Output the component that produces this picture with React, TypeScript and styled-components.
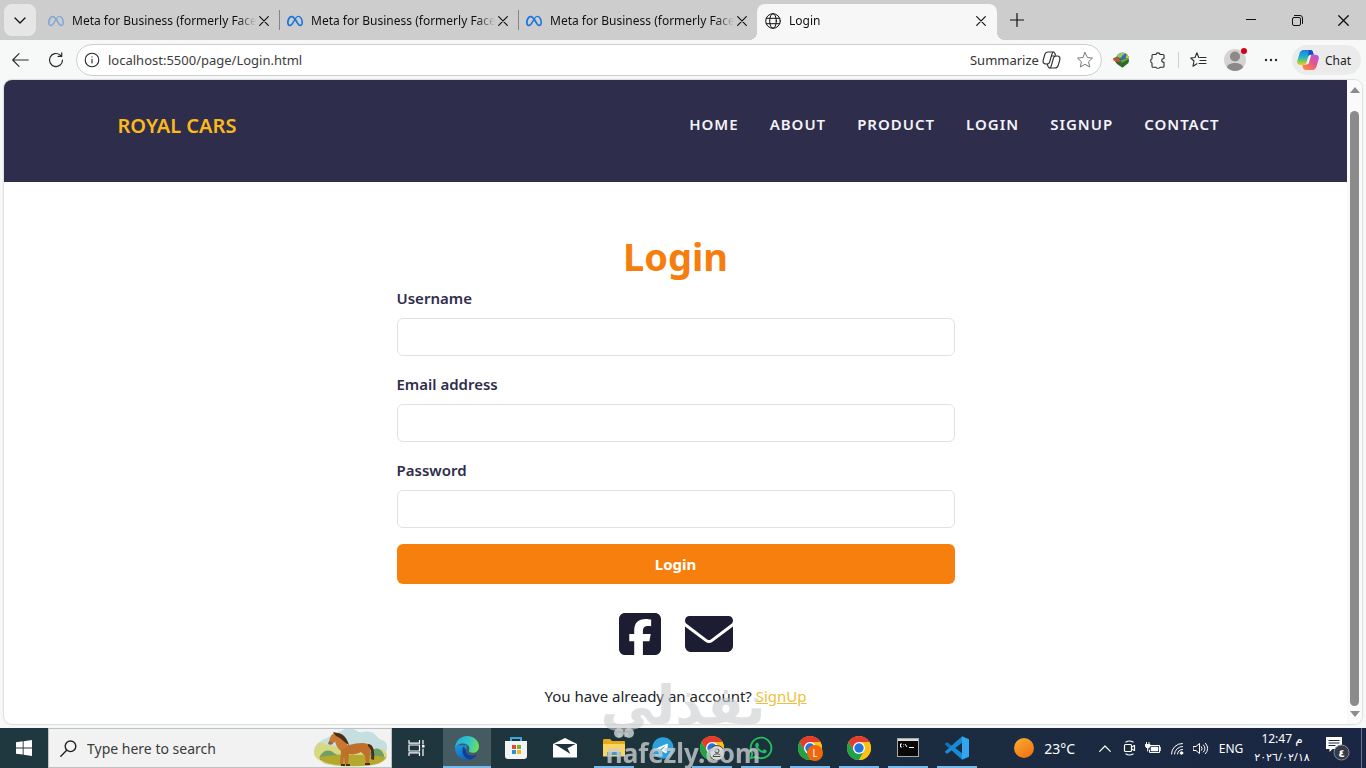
import React from "react";
import styled, { createGlobalStyle, css } from "styled-components";
import { FaEnvelope, FaMeta, FaSquareFacebook, FaTelegram, FaWhatsapp } from "react-icons/fa6";

const GlobalStyle = createGlobalStyle`
  *, *::before, *::after { box-sizing: border-box; }
  body { margin: 0; background: #f7f8f8; color: #212529; font-family: "Noto Sans", "Open Sans", "DejaVu Sans", sans-serif; }
  button { font: inherit; color: inherit; border: 0; background: none; padding: 0; cursor: pointer; }
  svg { display: block; flex: none; }
`;

const Desktop = styled.div`
  position: relative;
  display: flex;
  flex-direction: column;
  min-height: 100vh;
`;

/* Tab strip */
const TabStrip = styled.div`
  display: flex;
  align-items: flex-end;
  height: 40px;
  padding-left: 4px;
  background: #cdcdcd;
  color: #111;
`;
const TabMenuButton = styled.button`
  display: grid;
  place-items: center;
  width: 32px;
  height: 32px;
  margin: 0 4px 4px 0;
  border-radius: 8px;
  background: #e6e6e6;
`;
const Tab = styled.div<{ $active?: boolean; $divider?: boolean }>`
  position: relative;
  display: flex;
  align-items: center;
  gap: 8px;
  flex: 0 1 239px;
  min-width: 0;
  height: 36px;
  padding: 0 7px 3px 8px;
  border-radius: 8px 8px 0 0;
  font-size: 12px;
  ${(p) => p.$divider && css`
    &::after { content: ""; position: absolute; right: -1px; top: 6px; width: 1px; height: 20px; background: #858585; }
  `}
  ${(p) => p.$active && css`
    flex-basis: 240px;
    padding-right: 8px;
    background: #f7f7f7;
    &::before, &::after { content: ""; position: absolute; bottom: 0; width: 8px; height: 8px; }
    &::before { left: -8px; background: radial-gradient(circle at 0 0, transparent 8px, #f7f7f7 8px); }
    &::after { right: -8px; background: radial-gradient(circle at 100% 0, transparent 8px, #f7f7f7 8px); }
  `}
`;
const TabTitle = styled.span`
  flex: 1;
  min-width: 0;
  margin-right: -8px;
  overflow: hidden;
  white-space: nowrap;
  line-height: 20px;
  mask-image: linear-gradient(to right, #000 calc(100% - 18px), transparent);
`;
const TabIcon = styled.span<{ $faded?: boolean }>`
  color: #1673e0;
  opacity: ${(p) => (p.$faded ? 0.4 : 1)};
`;
const CloseButton = styled.button`
  display: grid;
  place-items: center;
  width: 16px;
  height: 16px;
`;
const NewTabButton = styled.button`
  display: grid;
  place-items: center;
  width: 40px;
  height: 40px;
`;
const WindowControls = styled.div`
  display: flex;
  margin-left: auto;
`;
const WindowButton = styled.button`
  display: grid;
  place-items: center;
  width: 46px;
  height: 40px;
`;

/* Address row */
const Toolbar = styled.div`
  display: flex;
  align-items: center;
  height: 40px;
  padding-right: 5px;
  background: #f7f8f8;
`;
const ToolButton = styled.button<{ $width?: number }>`
  position: relative;
  display: grid;
  place-items: center;
  width: ${(p) => p.$width ?? 36}px;
  height: 32px;
  color: #2b2b2b;
`;
const AddressBar = styled.div`
  display: flex;
  align-items: center;
  flex: 1;
  min-width: 0;
  height: 32px;
  margin: 0 2px 0 4px;
  padding: 0 7px;
  border: 1px solid #cdcfcf;
  border-radius: 16px;
  background: #fff;
  font-size: 13px;
`;
const AddressInput = styled.input`
  flex: 1;
  min-width: 0;
  margin-left: 8px;
  padding: 0;
  border: 0;
  outline: 0;
  background: none;
  color: #3c3c3c;
  font: inherit;
`;
const Summarize = styled.button`
  display: flex;
  align-items: center;
  gap: 3px;
  margin-right: 15px;
  font-size: 13px;
  color: #333;
`;
const ToolDivider = styled.span`
  width: 1px;
  height: 16px;
  margin: 0 2px;
  background: #cfcfcf;
`;
const AvatarDot = styled.span`
  position: absolute;
  top: 4px;
  right: 6px;
  width: 6px;
  height: 6px;
  border-radius: 50%;
  background: #d0021b;
`;
const ChatButton = styled.button`
  display: flex;
  align-items: center;
  gap: 6px;
  height: 30px;
  margin-left: 3px;
  padding: 0 10px 0 5px;
  border-radius: 15px;
  background: #ebebeb;
  font-size: 12px;
  color: #222;
`;

/* Web page viewport */
const Viewport = styled.div`
  display: flex;
  flex: 1;
  margin: 0 4px 4px;
  border-radius: 8px;
  background: #fff;
  box-shadow: 0 0 1px 1px #dcdede;
  overflow: hidden;
`;
const Site = styled.div`
  flex: 1;
  min-width: 0;
`;
const SiteHeader = styled.header`
  padding: 25px 0 37px;
  background: #2f2d4c;
`;
const HeaderInner = styled.div`
  display: flex;
  align-items: center;
  justify-content: space-between;
  max-width: 1140px;
  height: 40px;
  margin: 0 auto;
  padding: 0 26px 0 12px;
`;
const Brand = styled.a`
  color: #fbb91a;
  font-size: 20px;
  font-weight: 600;
  text-decoration: none;
`;
const Nav = styled.nav`
  display: flex;
  gap: 31px;
  padding-bottom: 2px;
`;
const NavLink = styled.a`
  color: #f4f4f8;
  font-size: 15px;
  font-weight: 600;
  letter-spacing: 1px;
  text-decoration: none;
`;
const Main = styled.main`
  max-width: 558px;
  margin: 0 auto;
  padding-top: 50px;
`;
const Title = styled.h1`
  margin: 0 0 6px;
  color: #f57e0e;
  font-size: 38px;
  font-weight: 700;
  line-height: 48px;
  text-align: center;
`;
const Field = styled.div`
  margin-bottom: 16px;
`;
const Label = styled.label`
  display: block;
  margin-bottom: 8px;
  color: #2f2d4c;
  font-size: 15px;
  font-weight: 600;
  line-height: 24px;
`;
const TextInput = styled.input`
  display: block;
  width: 100%;
  height: 38px;
  padding: 6px 12px;
  border: 1px solid #dee2e6;
  border-radius: 6px;
  background: #fff;
  font: inherit;
`;
const SubmitButton = styled.button`
  display: block;
  width: 100%;
  height: 40px;
  border-radius: 6px;
  background: #f77f0e;
  color: #fff;
  font-size: 15px;
  font-weight: 700;
`;
const Socials = styled.div`
  display: flex;
  justify-content: center;
  gap: 24px;
  padding: 26px 0;
`;
const SocialLink = styled.a`
  color: #1c1c33;
`;
const FacebookIcon = styled(FaSquareFacebook)`
  width: 42px;
  height: 48px;
`;
const SignupLine = styled.p`
  margin: 0;
  font-size: 15px;
  line-height: 24px;
  text-align: center;
`;
const SignupLink = styled.a`
  color: #eebf3a;
`;
const Scrollbar = styled.div`
  display: flex;
  flex-direction: column;
  align-items: center;
  justify-content: space-between;
  width: 15px;
  padding: 7px 0;
  background: #fafafa;
`;
const ScrollArrow = styled.span<{ $down?: boolean }>`
  border: 5px solid transparent;
  ${(p) => (p.$down ? "border-top: 6px solid #8b8b8b; border-bottom: 0;" : "border-bottom: 6px solid #8b8b8b; border-top: 0;")}
`;
const ScrollThumb = styled.span`
  flex: 1;
  width: 9px;
  margin: 18px 0 5px;
  border-radius: 5px;
  background: #8b8b8b;
`;

/* Windows taskbar */
const Taskbar = styled.footer`
  display: flex;
  height: 40px;
  background: linear-gradient(to right, #1f373e, #1d343d 50%, #1b2c3f 65%, #1a2643);
  color: #fff;
`;
const StartButton = styled.button`
  display: grid;
  place-items: center;
  width: 48px;
`;
const SearchBox = styled.label`
  display: flex;
  align-items: center;
  gap: 10px;
  flex: 0 1 344px;
  min-width: 0;
  padding: 0 2px 0 11px;
  border: 1px solid #bcc2c4;
  background: #f2f2f2;
  color: #222;
`;
const SearchInput = styled.input`
  flex: 1;
  min-width: 0;
  padding: 0;
  border: 0;
  outline: 0;
  background: none;
  font: inherit;
  font-size: 14px;
  &::placeholder { color: #3a3a3a; opacity: 1; }
`;
const Apps = styled.div`
  display: flex;
  gap: 1px;
`;
const AppButton = styled.button<{ $active?: boolean; $running?: boolean }>`
  position: relative;
  display: grid;
  place-items: center;
  width: 48px;
  background: ${(p) => (p.$active ? "#455a61" : "none")};
  ${(p) => (p.$active || p.$running) && css`
    &::after { content: ""; position: absolute; bottom: 0; left: ${p.$active ? 0 : 4}px; right: ${p.$active ? 0 : 4}px; height: 2px; background: #76b9ed; }
  `}
`;
const TaskViewButton = styled(AppButton)`
  margin-right: 3px;
`;
const Tray = styled.div`
  display: flex;
  align-items: center;
  margin-left: auto;
`;
const Weather = styled.button`
  display: flex;
  align-items: center;
  gap: 10px;
  margin-right: 18px;
  font-size: 14px;
`;
const TrayButton = styled.button`
  display: grid;
  place-items: center;
  width: 24px;
  height: 40px;
`;
const Language = styled.button`
  width: 36px;
  font-size: 12px;
`;
const Clock = styled.button`
  width: 66px;
  font-family: "Noto Sans", "DejaVu Sans", sans-serif;
  font-size: 12px;
  line-height: 18px;
`;
const DateLine = styled.div`
  font-size: 11px;
`;
const NotificationButton = styled.button`
  display: grid;
  place-items: center;
  width: 46px;
  height: 40px;
`;
const ShowDesktop = styled.button`
  width: 5px;
  height: 40px;
  border-left: 1px solid #66718a;
`;

/* Brand mark laid over the lower part of the screen */
const Watermark = styled.div`
  position: absolute;
  right: 0;
  bottom: 0;
  left: 0;
  display: flex;
  flex-direction: column;
  align-items: center;
  color: #c9cdd0;
  font-weight: 700;
  white-space: nowrap;
  pointer-events: none;
`;
const WatermarkArabic = styled.span`
  font-family: "DejaVu Sans", sans-serif;
  font-size: 54px;
  line-height: 44px;
  opacity: 0.6;
`;
const WatermarkLatin = styled.span`
  font-size: 26px;
  line-height: 30px;
  opacity: 0.8;
`;
const WatermarkDots = styled.svg`
  margin-right: 118px;
  opacity: 0.85;
`;

const line = { fill: "none", stroke: "currentColor", strokeLinecap: "round", strokeLinejoin: "round" } as const;

const Cross = ({ size = 10 }: { size?: number }) => (
  <svg width={size} height={size} viewBox="0 0 10 10" {...line} strokeWidth="1.2"><path d="M.7.7l8.6 8.6M9.3.7L.7 9.3" /></svg>
);

const Globe = () => (
  <svg width="16" height="16" viewBox="0 0 16 16" {...line}>
    <circle cx="8" cy="8" r="7.3" /><ellipse cx="8" cy="8" rx="3.3" ry="7.3" /><path d="M1.3 5.3h13.4M1.3 10.7h13.4" />
  </svg>
);

const CopilotLine = () => (
  <svg width="19" height="18" viewBox="0 0 19 18" {...line} strokeWidth="1.2">
    <path d="M5.2 13H3.8C1.5 13 .6 11.4 1.200 9.200L2.700 3.900C3.300 1.800 4.300 1 6 1h5.200c1 0 1.500.7 1.800 1.600l.4 1.400" />
    <path d="M13.800 5h1.400c2.300 0 3.200 1.600 2.600 3.800l-1.500 5.300c-.6 2.100-1.600 2.900-3.300 2.900H7.800c-1 0-1.500-.7-1.800-1.600L5.200 13c1.300 0 2-.6 2.400-1.900L10 2.800C10.300 1.700 10.700 1 11.400 1" />
    <path d="M7.700 17c.8 0 1.200-.7 1.500-1.800l2.300-8.100C11.900 5.700 12.600 5 13.800 5H9.500" />
  </svg>
);

const CopilotColor = () => (
  <svg width="22" height="20" viewBox="0 0 22 20">
    <defs>
      <linearGradient id="cpA" x1="0" y1="0" x2="0" y2="1"><stop offset="0" stopColor="#1683e9" /><stop offset=".5" stopColor="#27b4c7" /><stop offset=".8" stopColor="#95cb45" /><stop offset="1" stopColor="#f6cb24" /></linearGradient>
      <linearGradient id="cpB" x1="1" y1="0" x2=".2" y2="1"><stop offset="0" stopColor="#a95be8" /><stop offset=".5" stopColor="#e5558f" /><stop offset="1" stopColor="#fa8a3c" /></linearGradient>
    </defs>
    <path d="M6.500 0h7c1.500 0 2 .8 2.400 2l.8 2.700h-2.900c-1.500 0-2.200.7-2.700 2.200l-1.700 5.500C8.800 14.200 8 15 6.300 15H3.800C.8 15-.4 13 .4 10.400L2.500 3.500C3.200 1.200 4.500 0 6.500 0z" fill="url(#cpA)" />
    <path d="M11.500 0h2c1.500 0 2 .8 2.400 2l.8 2.700h-2.900c-1.200 0-2 .6-2.500 1.700z" fill="#1951c5" />
    <path d="M15.500 20h-7c-1.500 0-2-.8-2.400-2L5.300 15h2.300c1.500 0 2.500-.7 3-2.200l1.700-5.500c.5-1.700 1.300-2.500 3-2.500h2.900c3 0 4.200 2 3.400 4.600l-2.100 7.100c-.7 2.300-2 3.500-4 3.500z" fill="url(#cpB)" />
    <path d="M10 14.200l2.300-8c.3-.8.900-1.400 1.900-1.500l-2.500 8.500c-.3.900-.9 1.400-1.700 1z" fill="#fff" />
  </svg>
);

const IdmIcon = () => (
  <svg width="17" height="16" viewBox="0 0 17 16">
    <circle cx="9.500" cy="7" r="6.500" fill="#2f6fae" />
    <path d="M4 4C5.500 1 9.500 0 12 1.300c-1 2-2.600 1.700-3.200 3.200S5.200 6.400 4 4z" fill="#9fca5a" />
    <path d="M13.500 2.200c2.300 1.600 3 4.600 2 7.300l-3-1.500z" fill="#d9c23a" />
    <path d="M0 6.500L3.500 5l4.500 3.500L14.500 6 16 8l-.6 3-5.900 4.800L4 12z" fill="#2c6a25" />
    <path d="M0 6.500L3.500 5 8 8.500l-1.500 1.500L1 9z" fill="#c9542f" />
    <path d="M8 8.500L14.500 6l1 1.300L8.500 11z" fill="#63a944" />
  </svg>
);

const Chrome = ({ badge }: { badge?: "letter" | "person" }) => (
  <svg width="26" height="26" viewBox="0 0 26 26">
    <g transform="translate(1 1)">
      <circle cx="12" cy="12" r="12" fill="#fbc116" />
      <path d="M12 6h10.400A12 12 0 0 0 1.600 6l5.200 9z" fill="#e33b2e" />
      <path d="M1.600 6A12 12 0 0 0 12 24l5.200-9-10.400 0z" fill="#1fa24a" />
      <path d="M12 6h10.400A12 12 0 0 1 12 24l5.200-9z" fill="#fbc116" />
      <circle cx="12" cy="12" r="6" fill="#fff" /><circle cx="12" cy="12" r="4.700" fill="#2374e1" />
    </g>
    {badge === "letter" && <><circle cx="18" cy="18" r="8" fill="#f0680b" /><text x="18" y="22" textAnchor="middle" fontSize="10" fill="#fff">L</text></>}
    {badge === "person" && <g stroke="#444" fill="#dcdcdc"><circle cx="18" cy="18" r="7.500" /><circle cx="18" cy="16" r="2" /><path d="M14 21.500c1-3.500 7-3.500 8 0z" /></g>}
  </svg>
);

const Edge = () => (
  <svg width="24" height="24" viewBox="0 0 24 24">
    <defs>
      <linearGradient id="edTop" x1="0" y1=".3" x2="1" y2=".5"><stop offset="0" stopColor="#25a9e0" /><stop offset=".55" stopColor="#2fc5c8" /><stop offset="1" stopColor="#6de05a" /></linearGradient>
      <linearGradient id="edBase" x1="0" y1="0" x2=".8" y2="1"><stop offset="0" stopColor="#1b9ce2" /><stop offset="1" stopColor="#0b57b5" /></linearGradient>
    </defs>
    <path d="M.3 9.500C-1 17 4.500 24 12 24c4.500 0 8-2 10-5.400-5 2.500-10.500.5-10.700-4.100L12 9z" fill="url(#edBase)" />
    <path d="M8.500 10.500C6 15 8 22 15 23.600c3-.7 5.500-2.400 7-5-5 2.500-11.500.4-11-4.400z" fill="#123f8f" />
    <path d="M.1 11.500C.5 5 5.500 0 12 0c7 0 12 5 12 10.500 0 4-2.800 6.300-6.300 6.300-3 0-4.200-1.200-3.700-2.200 1.500-3-.8-7-5.500-7C4.500 7.600 1 9.500.1 11.500z" fill="url(#edTop)" />
  </svg>
);

const Horse = () => (
  <svg width="76" height="38" viewBox="0 0 76 38">
    <path d="M8 12C12 9 14 10 18 6S26 4 30 1s10-2 14 1 8-1 14 1 5 6 11 8 6 8 4 12 1 7-4 9-9 4-14 4H19c-5 0-9-1-11-4s-7-4-7-9 3-9 7-11z" fill="#c5dfe1" />
    <path d="M1 23C2 15 7 12 13 15l18 5h38c6 2 6 8 3 11-8 8-56 9-64 1-5-2-7-5-7-9z" fill="#d7d982" />
    <path d="M7 27c4-6 9-7 14-3s8 0 13 2v5H7zM55 26c5-9 13-8 16 0v4H55z" fill="#6f9e66" />
    <path d="M6 28c18-3 45-3 67 0-4 8-15 9-30 9S9 36 6 28z" fill="#b5a82e" />
    <path d="M26 14c3 2 6 3 10 2 8-2 14-3 19-1 3 2 3 6 2 9l-1 10h-3l-1-7-4-4c-4 2-8 3-12 2l-1 10h-3l-1-9-1 9h-3l1-13c-4-3-5-7-6-10z" fill="#bf702a" />
    <path d="M21 4c6-1 10 4 13 11 0 4-4 7-8 5-2-2-3-6-3-8l-4 3-3-1c0-4 2-8 5-10z" fill="#c9792f" />
    <path d="M20 3l4 1c6 0 10 5 12 12-5-2-7-7-13-9zM55 15c5 0 7 6 6 16l-3-1c1-6 0-11-3-13zM28 35h4v2h-4zM33 35h4v2h-4zM52 34h5v2h-5z" fill="#4c2b18" />
    <path d="M16 12l4 2-2 2-3-1z" fill="#86665a" />
  </svg>
);

const fields = [
  { id: "username", label: "Username", type: "text" },
  { id: "email", label: "Email address", type: "email" },
  { id: "password", label: "Password", type: "password" },
];
const navItems = ["HOME", "ABOUT", "PRODUCT", "LOGIN", "SIGNUP", "CONTACT"];

const BrowserChrome = () => (
  <>
    <TabStrip>
      <TabMenuButton aria-label="Tab actions"><svg width="12" height="7" viewBox="0 0 12 7" {...line} strokeWidth="1.300"><path d="M1 1l5 5 5-5" /></svg></TabMenuButton>
      {[0, 1, 2].map((i) => (
        <Tab key={i} $divider={i < 2}>
          <TabIcon $faded={i === 0}><FaMeta size={16} /></TabIcon>
          <TabTitle>Meta for Business (formerly Facebook)</TabTitle>
          <CloseButton aria-label="Close tab"><Cross /></CloseButton>
        </Tab>
      ))}
      <Tab $active>
        <Globe />
        <TabTitle>Login</TabTitle>
        <CloseButton aria-label="Close tab"><Cross /></CloseButton>
      </Tab>
      <NewTabButton aria-label="New tab"><svg width="14" height="14" viewBox="0 0 14 14" {...line} strokeWidth="1.200"><path d="M7 .5v13M.5 7h13" /></svg></NewTabButton>
      <WindowControls>
        <WindowButton aria-label="Minimize"><svg width="10" height="10" viewBox="0 0 10 10" {...line}><path d="M0 4.500h10" /></svg></WindowButton>
        <WindowButton aria-label="Restore"><svg width="11" height="11" viewBox="0 0 11 11" {...line}><rect x=".5" y="2.500" width="8" height="8" rx="1.500" /><path d="M2.500.5H8A2.500 2.500 0 0 1 10.500 3v5.500" /></svg></WindowButton>
        <WindowButton aria-label="Close window"><Cross size={11} /></WindowButton>
      </WindowControls>
    </TabStrip>
    <Toolbar>
      <ToolButton $width={40} aria-label="Back"><svg width="17" height="14" viewBox="0 0 17 14" {...line} strokeWidth="1.100"><path d="M7 .7L.7 7 7 13.300M.7 7h15.600" /></svg></ToolButton>
      <ToolButton $width={32} aria-label="Reload"><svg width="16" height="16" viewBox="0 0 16 16" {...line} strokeWidth="1.200"><path d="M14.500 8A6.500 6.500 0 1 1 12 2.900l1.500 1.300M13.700.8v3.600h-3.600" /></svg></ToolButton>
      <AddressBar>
        <svg width="16" height="16" viewBox="0 0 16 16" {...line} strokeWidth="1.100"><circle cx="8" cy="8" r="6.800" /><path d="M8 7.300v3.700M8 4.800v.2" /></svg>
        <AddressInput aria-label="Address" defaultValue="localhost:5500/page/Login.html" />
        <Summarize>Summarize <CopilotLine /></Summarize>
        <button aria-label="Favorite"><svg width="18" height="18" viewBox="0 0 18 18" {...line} stroke="#777"><path d="M9 1.500l2.300 5 5.200.6-3.900 3.600 1.100 5.300L9 13.300 4.300 16l1.100-5.300-3.900-3.600 5.200-.6z" /></svg></button>
      </AddressBar>
      <ToolButton aria-label="Downloads"><IdmIcon /></ToolButton>
      <ToolButton aria-label="Extensions"><svg width="16" height="17" viewBox="0 0 16 17" {...line} strokeWidth="1.100"><path d="M3 2.500h3C6 .3 10 .3 10 2.500h3a1 1 0 0 1 1 1v3c-3-.2-3 4 0 3.800v4a1 1 0 0 1-1 1h-3c0-.2.200 1-2 1s-2-1.200-2-1H3a1 1 0 0 1-1-1V11c-1.800-.3-1.800-4 0-4.300V3.500a1 1 0 0 1 1-1z" /></svg></ToolButton>
      <ToolDivider />
      <ToolButton aria-label="Favorites"><svg width="17" height="16" viewBox="0 0 17 16" {...line} strokeWidth="1.100"><path d="M9 5.500H8.700L6.900.8 5 5.500.7 6l3.300 3-1 5.200 3.900-2.500M10 5.500h6M10 8.500h6M9 11.500h7" /></svg></ToolButton>
      <ToolButton aria-label="Profile">
        <svg width="22" height="22" viewBox="0 0 22 22"><circle cx="11" cy="11" r="11" fill="#d4d3d1" /><circle cx="11" cy="7.500" r="5" fill="#8c8a88" /><path d="M3 18.500c0-6 16-6 16 0-4 4.600-12 4.600-16 0z" fill="#8c8a88" /></svg>
        <AvatarDot />
      </ToolButton>
      <ToolButton aria-label="More"><svg width="14" height="4" viewBox="0 0 14 4" fill="currentColor"><circle cx="2" cy="2" r="1.200" /><circle cx="7" cy="2" r="1.200" /><circle cx="12" cy="2" r="1.200" /></svg></ToolButton>
      <ChatButton><CopilotColor />Chat</ChatButton>
    </Toolbar>
  </>
);

const LoginPage = () => (
  <Site>
    <SiteHeader>
      <HeaderInner>
        <Brand href="#">ROYAL CARS</Brand>
        <Nav>{navItems.map((item) => <NavLink key={item} href="#">{item}</NavLink>)}</Nav>
      </HeaderInner>
    </SiteHeader>
    <Main>
      <Title>Login</Title>
      <form onSubmit={(e) => e.preventDefault()}>
        {fields.map((f) => (
          <Field key={f.id}><Label htmlFor={f.id}>{f.label}</Label><TextInput id={f.id} type={f.type} /></Field>
        ))}
        <SubmitButton type="submit">Login</SubmitButton>
      </form>
      <Socials>
        <SocialLink href="#" aria-label="Facebook"><FacebookIcon /></SocialLink>
        <SocialLink href="#" aria-label="Email"><FaEnvelope size={48} /></SocialLink>
      </Socials>
      <SignupLine>You have already an account? <SignupLink href="#">SignUp</SignupLink></SignupLine>
    </Main>
  </Site>
);

const WindowsTaskbar = () => (
  <Taskbar>
    <StartButton aria-label="Start"><svg width="16" height="16" viewBox="0 0 16 16" fill="#fff"><path d="M0 2.300L6.700 1.300v6.200H0zM7.600 1.200L16 0v7.500H7.600zM0 8.400h6.700v6.200L0 13.700zM7.600 8.400H16V16l-8.400-1.200z" /></svg></StartButton>
    <SearchBox>
      <svg width="17" height="17" viewBox="0 0 17 17" {...line} strokeWidth="1.400"><circle cx="10.500" cy="6.300" r="5.300" /><path d="M6.700 10.200L.8 16.200" /></svg>
      <SearchInput placeholder="Type here to search" />
      <Horse />
    </SearchBox>
    <TaskViewButton aria-label="Task view"><svg width="17" height="16" viewBox="0 0 17 16" {...line} strokeWidth="1.200"><path d="M1 .5v2.700h10.500V.5M1 15.500v-2.700h10.500v2.700M1 5h10.500v6H1zM15 0v4M15 9v7" /><rect x="14" y="5" width="2.500" height="2.500" fill="#fff" stroke="none" /></svg></TaskViewButton>
    <Apps>
      <AppButton $active aria-label="Edge"><Edge /></AppButton>
      <AppButton aria-label="Store"><svg width="24" height="24" viewBox="0 0 24 24"><path d="M7 6V2h10v4" fill="none" stroke="#38a8d9" strokeWidth="2" /><path d="M1 5h22v15a3 3 0 0 1-3 3H4a3 3 0 0 1-3-3z" fill="#f1f3f4" /><path d="M8 9h4v4H8z" fill="#e74b2c" /><path d="M13 9h4v4h-4z" fill="#78b52b" /><path d="M8 14h4v4H8z" fill="#2495d3" /><path d="M13 14h4v4h-4z" fill="#f3b51d" /></svg></AppButton>
      <AppButton aria-label="Mail"><svg width="24" height="20" viewBox="0 0 24 20"><path d="M0 6l12-6 12 6v13.500H0z" fill="#fff" /><path d="M1.500 6h21L14.500 10.200 17.500 16z" fill="#1d343d" /></svg></AppButton>
      <AppButton $running aria-label="File Explorer"><svg width="22" height="20" viewBox="0 0 22 20"><path d="M0 2.500C0 1.500.5 1 1.500 1H7l2 2h12c.7 0 1 .5 1 1v14H0z" fill="#e5a91e" /><path d="M0 6h22v12.500H0z" fill="#fbd462" /><path d="M4 19v-5h14v5h-3v-2H7v2z" fill="#4597d1" /></svg></AppButton>
      <AppButton aria-label="Telegram"><svg width="22" height="22" viewBox="0 0 22 22"><circle cx="11" cy="11" r="10" fill="#fff" /><FaTelegram size={22} color="#2aa1dc" /></svg></AppButton>
      <AppButton $running aria-label="Chrome profile"><Chrome badge="person" /></AppButton>
      <AppButton $running aria-label="WhatsApp"><FaWhatsapp size={26} color="#24bd5c" /></AppButton>
      <AppButton $running aria-label="Chrome L"><Chrome badge="letter" /></AppButton>
      <AppButton $running aria-label="Chrome"><Chrome /></AppButton>
      <AppButton $running aria-label="Command Prompt"><svg width="22" height="20" viewBox="0 0 22 20"><rect x=".5" y=".5" width="21" height="18" fill="#080808" stroke="#a9a9a9" /><path d="M1 1h20v2H1z" fill="#ddd" /><path d="M5 6H3.500v3H5M6.500 6.300v.5M6.500 8.500v.5M8 6l2 3M12 9.500h5" fill="none" stroke="#fff" /></svg></AppButton>
      <AppButton $running aria-label="Visual Studio Code"><svg width="24" height="24" viewBox="0 0 24 24"><path d="M17 .5L6.800 9.700 2.300 6.300 0 7.400v1.200L17 23.500l1-5.500v-12z" fill="#1173b8" /><path d="M17 23.500L6.800 14.300l-4.500 3.400L0 16.600v-1.200L17 .5l1 5.500v12z" fill="#1a8ad4" /><path d="M17 6.800L10.300 12l6.700 5.200z" fill="#1b2c3f" /><path d="M17 .2l7 3v17.600l-7 3z" fill="#32a7ee" /></svg></AppButton>
    </Apps>
    <Tray>
      <Weather><svg width="20" height="20" viewBox="0 0 20 20"><defs><linearGradient id="sun" x1="0" y1="0" x2=".6" y2="1"><stop offset="0" stopColor="#f9ae2f" /><stop offset="1" stopColor="#f27516" /></linearGradient></defs><circle cx="10" cy="10" r="10" fill="url(#sun)" /></svg>23°C</Weather>
      <TrayButton aria-label="Hidden icons"><svg width="12" height="7" viewBox="0 0 12 7" {...line} strokeWidth="1.200"><path d="M.7 6.300L6 1l5.300 5.300" /></svg></TrayButton>
      <TrayButton aria-label="Meet now"><svg width="13" height="16" viewBox="0 0 13 16" {...line} strokeWidth="1.200"><rect x="1.500" y="4.500" width="7" height="7" rx="1" /><path d="M8.500 7l3-1.500v5l-3-1.500M3 2q3.500-2 7 0M3 14q3.500 2 7 0" /></svg></TrayButton>
      <TrayButton aria-label="Battery"><svg width="16" height="12" viewBox="0 0 16 12" {...line}><path d="M5 3.500h9.500v7h-10V8" /><path d="M6.500 5.500h6v3h-6zM15 5.500v3" fill="#fff" strokeWidth="1.500" /><path d="M1.500.5v2M4 .5v2M.5 2.500H5v2L3.500 6H2L.5 4.500zM2.700 6v3" fill="#fff" /></svg></TrayButton>
      <TrayButton aria-label="Network"><svg width="14" height="13" viewBox="0 0 14 13" {...line}><path d="M1.500 12A10.500 10.500 0 0 1 12.500 1.500M4.500 12A8 8 0 0 1 12.500 4.500M7.500 12A5 5 0 0 1 12.500 7.500" /><circle cx="11.500" cy="11" r="1.300" fill="#fff" /></svg></TrayButton>
      <TrayButton aria-label="Volume"><svg width="16" height="13" viewBox="0 0 16 13" {...line}><path d="M.5 4.500h2.500l3.500-3v10L3 8.500H.5zM8.500 4.700q1.500 1.800 0 3.600M10.500 3q3 3.500 0 7M12.500 1.300q4.500 5.200 0 10.400" /></svg></TrayButton>
      <Language>ENG</Language>
      <Clock><div dir="ltr">12:47 م</div><DateLine dir="ltr">٢٠٢٦/٠٢/١٨</DateLine></Clock>
      <NotificationButton aria-label="Notifications"><svg width="26" height="26" viewBox="0 0 26 26"><path d="M1 2h16v12H7.500L4.500 17v-3H1z" fill="#fff" /><path d="M3.500 5.500h11M3.500 8h11M3.500 10.500h7" stroke="#1a2643" /><circle cx="16.500" cy="17.500" r="7.500" fill="#343a46" stroke="#8b8f98" /><text x="16.500" y="21.500" textAnchor="middle" fontSize="11" fontWeight="700" fill="#fff">٤</text></svg></NotificationButton>
      <ShowDesktop aria-label="Show desktop" />
    </Tray>
  </Taskbar>
);

export default function App() {
  return (
    <Desktop>
      <GlobalStyle />
      <BrowserChrome />
      <Viewport>
        <LoginPage />
        <Scrollbar><ScrollArrow /><ScrollThumb /><ScrollArrow $down /></Scrollbar>
      </Viewport>
      <WindowsTaskbar />
      <Watermark>
        <WatermarkArabic>نفذلي</WatermarkArabic>
        <WatermarkDots width="22" height="10" viewBox="0 0 22 10" fill="currentColor"><circle cx="6" cy="5" r="5" /><circle cx="16" cy="5" r="5" /></WatermarkDots>
        <WatermarkLatin>nafezly.com</WatermarkLatin>
      </Watermark>
    </Desktop>
  );
}
